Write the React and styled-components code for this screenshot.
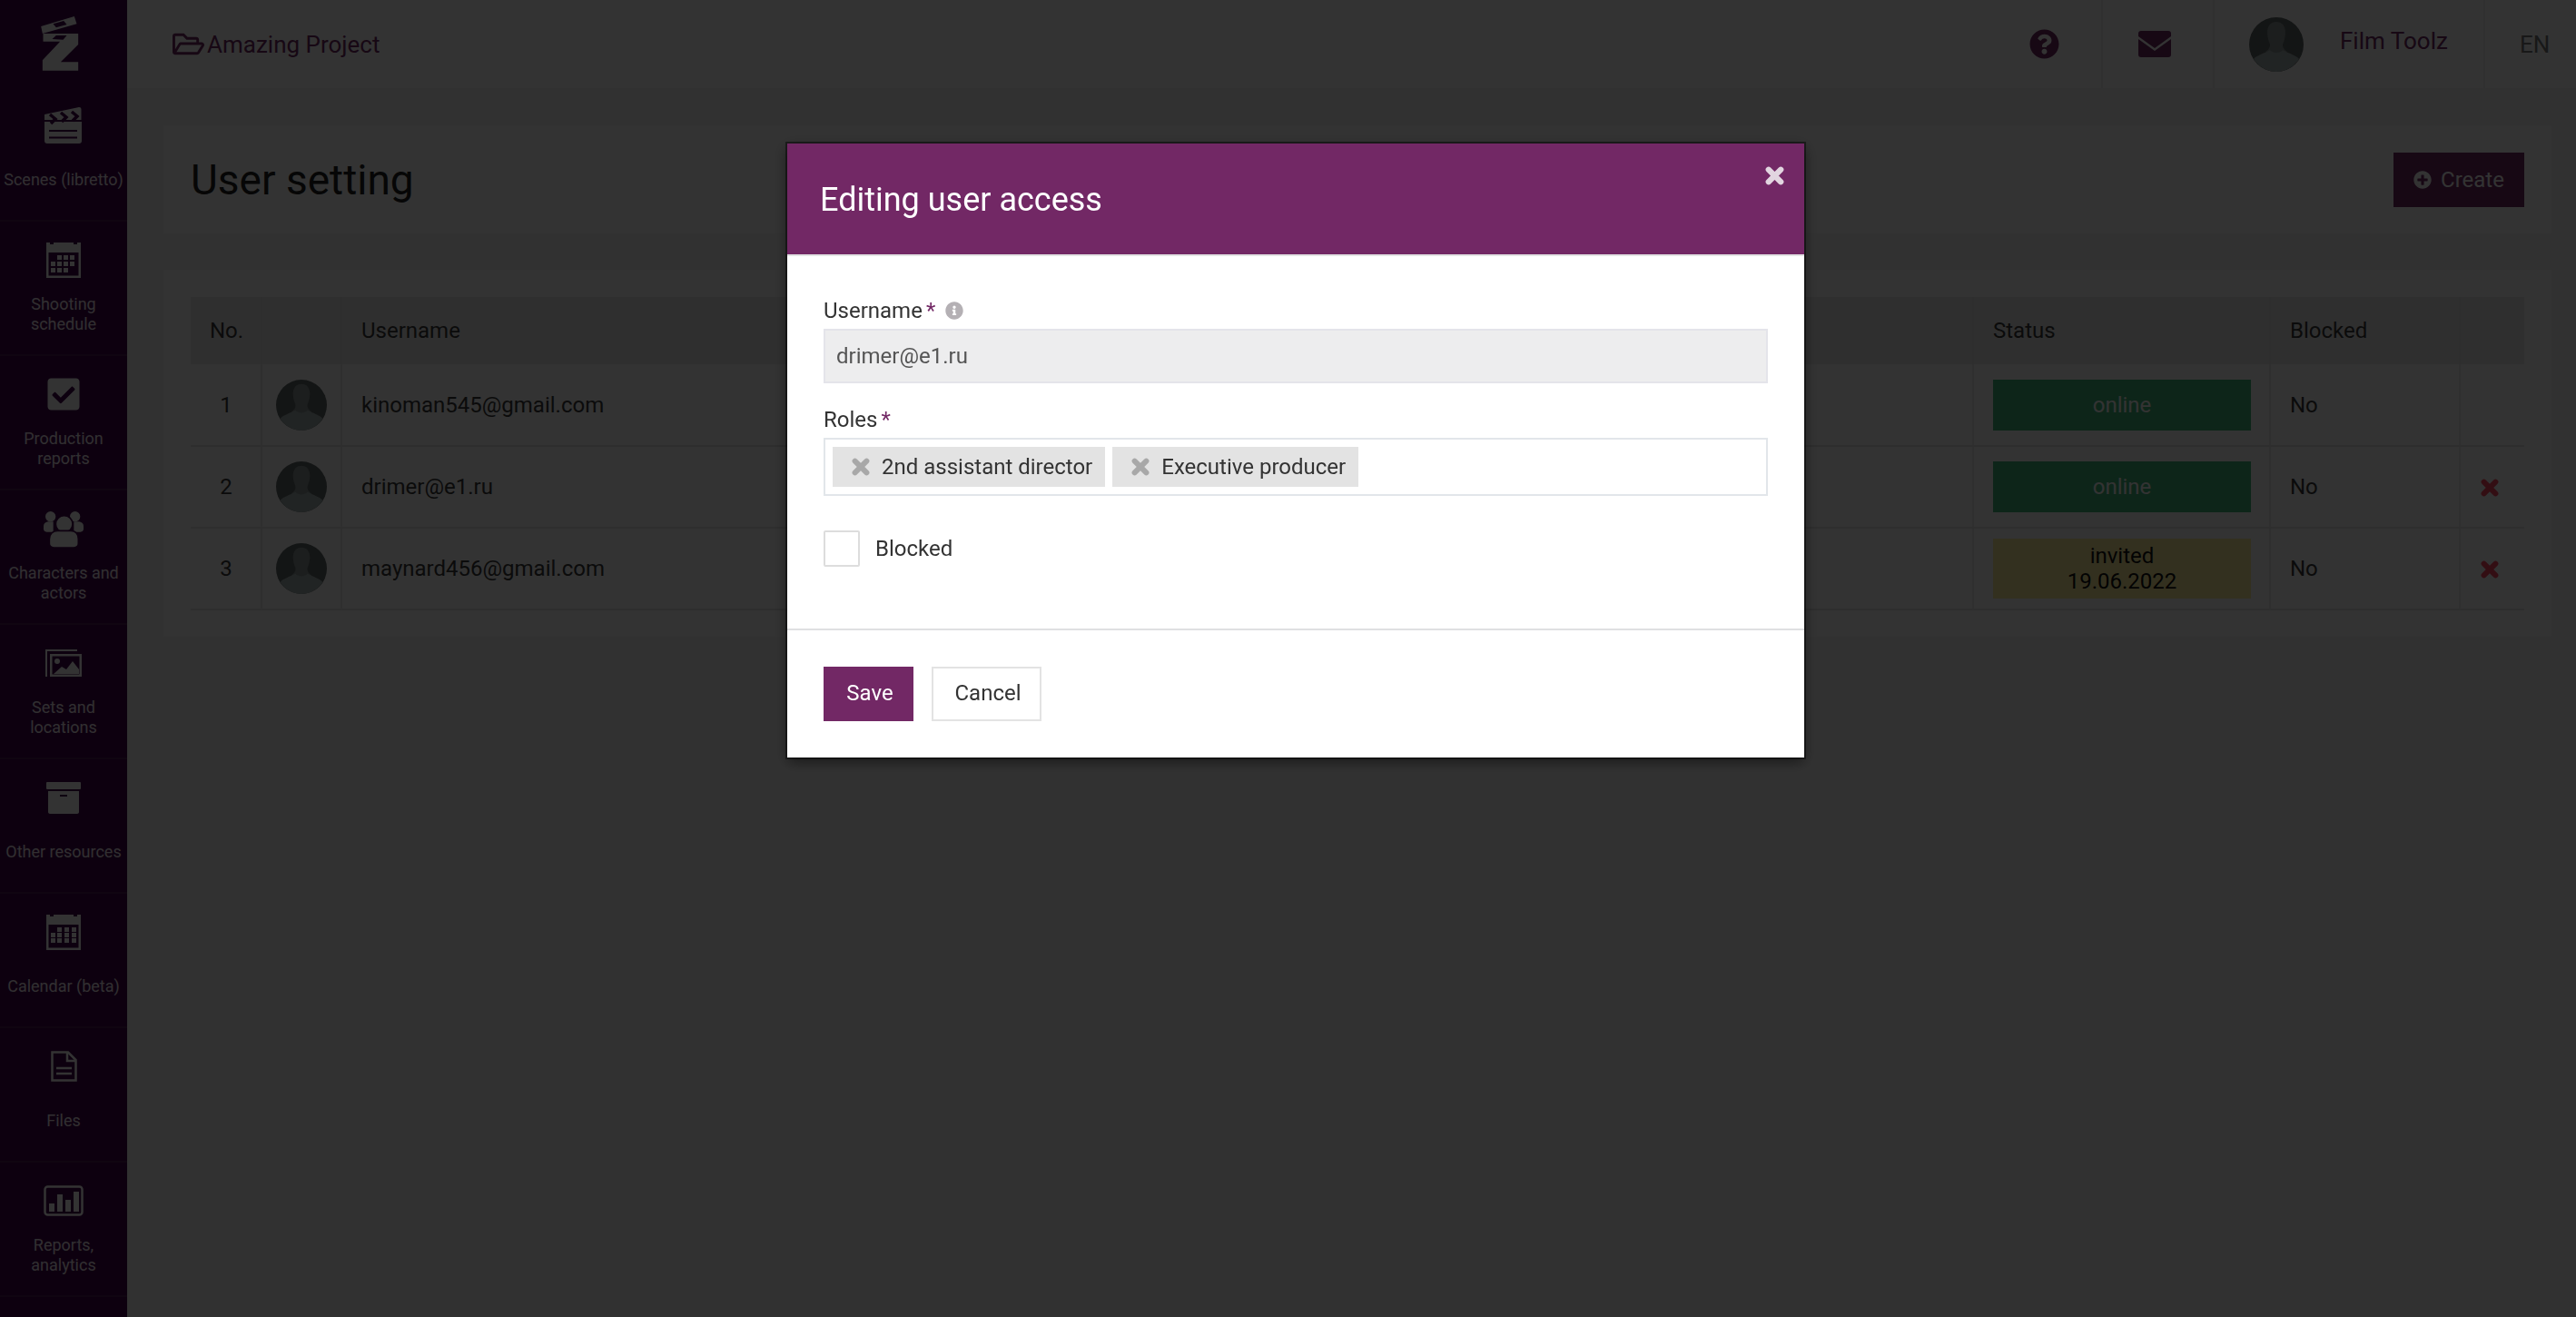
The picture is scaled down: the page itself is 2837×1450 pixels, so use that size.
import React from 'react';
import styled, { createGlobalStyle } from 'styled-components';
import {
  FaRegFolderOpen,
  FaQuestionCircle,
  FaCheckSquare,
  FaPlusCircle,
  FaInfoCircle,
} from 'react-icons/fa';

const PURPLE = '#722865';

const GlobalStyle = createGlobalStyle`
  html, body {
    margin: 0;
    padding: 0;
    height: 100%;
    overflow: hidden;
    background: #f6f6f6;
    font-family: Roboto, "Liberation Sans", sans-serif;
  }
  * {
    box-sizing: border-box;
  }
`;

const Layout = styled.div`
  display: flex;
  height: 100vh;
  overflow: hidden;
`;

const Sidebar = styled.nav`
  flex: 0 0 140px;
  background: #41004b;
  color: #fff;
  display: flex;
  flex-direction: column;
`;

const LogoBox = styled.div`
  height: 96px;
  flex: 0 0 96px;
  display: flex;
  align-items: center;
  justify-content: center;
  padding-right: 8px;
`;

const NavItem = styled.a`
  flex: 0 0 148px;
  height: 148px;
  padding-top: 20px;
  display: flex;
  flex-direction: column;
  align-items: center;
  border-bottom: 2px solid #4f1a58;
`;

const NavIcon = styled.div`
  height: 44px;
  display: flex;
  align-items: center;
  justify-content: center;
  color: #fff;
`;

const NavLabel = styled.div`
  margin-top: 16px;
  height: 44px;
  display: flex;
  align-items: center;
  text-align: center;
  font-size: 18px;
  line-height: 22px;
  color: #f2e8f2;
  white-space: pre-line;
`;

const Main = styled.div`
  flex: 1;
  min-width: 0;
  display: flex;
  flex-direction: column;
`;

const Topbar = styled.header`
  height: 97px;
  flex: 0 0 97px;
  background: #fff;
  display: flex;
  align-items: stretch;
  justify-content: space-between;
`;

const ProjectName = styled.div`
  display: flex;
  align-items: center;
  gap: 3px;
  padding-left: 50px;
  font-size: 26px;
  color: ${PURPLE};
`;

const TopActions = styled.div`
  display: flex;
`;

const TopCell = styled.div`
  width: ${(p) => p.$w}px;
  display: flex;
  align-items: center;
  justify-content: center;
  color: ${PURPLE};
  border-left: ${(p) => (p.$divider ? '2px solid #f0f0f0' : 'none')};
`;

const MailCell = styled(TopCell)`
  padding-right: 8px;
`;

const UserCell = styled(TopCell)`
  justify-content: flex-start;
  padding-left: 38px;
  gap: 40px;
  font-size: 26px;
`;

const UserName = styled.span`
  position: relative;
  top: -4px;
`;

const Lang = styled(TopCell)`
  font-size: 26px;
  color: #777;
  justify-content: flex-start;
  padding-left: 38px;
`;

const Content = styled.main`
  padding: 41px 27px 0 40px;
  display: flex;
  flex-direction: column;
  gap: 40px;
`;

const TitlePanel = styled.section`
  height: 119px;
  background: #fff;
  padding: 0 30px;
  display: flex;
  align-items: center;
  justify-content: space-between;
`;

const PageTitle = styled.h1`
  margin: 0;
  font-size: 46px;
  font-weight: 400;
  color: #222;
`;

const CreateButton = styled.button`
  width: 144px;
  height: 60px;
  border: 0;
  border-radius: 0;
  background: ${PURPLE};
  color: #fff;
  display: flex;
  align-items: center;
  justify-content: center;
  gap: 10px;
  font: inherit;
  font-size: 24px;
`;

const TablePanel = styled.section`
  background: #fff;
  padding: 30px 30px 29px;
`;

const Table = styled.table`
  width: 100%;
  table-layout: fixed;
  border-collapse: collapse;
  font-size: 24px;
  color: #3a3a3a;
`;

const HeadCell = styled.th`
  height: 74px;
  background: #ececec;
  font-weight: 400;
  text-align: ${(p) => p.$align || 'left'};
  padding: 0 20px 0 21px;
  border-left: 2px solid #e4e4e4;
  &:first-child {
    border-left: 0;
  }
`;

const Cell = styled.td`
  height: 90px;
  padding: 0 20px 0 21px;
  text-align: ${(p) => p.$align || 'left'};
  border-left: 2px solid #ececec;
  border-bottom: 2px solid #e4e4e4;
  vertical-align: middle;
  &:first-child {
    border-left: 0;
  }
`;

const AvatarCell = styled(Cell)`
  padding: 0;
  text-align: center;
  line-height: 0;
`;

const DeleteCell = styled(Cell)`
  padding: 2px 30px 0 22px;
`;

const StatusBadge = styled.div`
  min-height: 56px;
  padding: 5px 0;
  display: flex;
  flex-direction: column;
  align-items: center;
  justify-content: center;
  background: ${(p) => (p.$invited ? '#fff09a' : '#41b97d')};
  color: ${(p) => (p.$invited ? '#111' : '#fff')};
  font-size: 24px;
  line-height: 28px;
`;

const DeleteMark = styled.span`
  color: #ff4660;
  line-height: 0;
  display: block;
  text-align: center;
`;

const Overlay = styled.div`
  position: fixed;
  inset: 0;
  background: rgba(0, 0, 0, 0.8);
  display: flex;
  justify-content: center;
  align-items: flex-start;
  padding: 158px 0 0 17px;
`;

const Modal = styled.div`
  position: relative;
  width: 1120px;
  height: 676px;
  background: #fff;
  display: flex;
  flex-direction: column;
  box-shadow: 0 0 0 2px rgba(0, 0, 0, 0.45), 0 5px 15px rgba(0, 0, 0, 0.5);
`;

const ModalHeader = styled.div`
  height: 124px;
  flex: 0 0 124px;
  background: ${PURPLE};
  border-bottom: 2px solid #e3e3e3;
  padding: 2px 38px 0 36px;
  display: flex;
  align-items: center;
`;

const ModalTitle = styled.h2`
  margin: 0;
  font-size: 36px;
  font-weight: 400;
  color: #fff;
`;

const CloseButton = styled.button`
  position: absolute;
  top: 24px;
  right: 22px;
  width: 22px;
  height: 22px;
  padding: 0;
  border: 0;
  background: none;
  color: #e2d5e0;
  line-height: 0;
`;

const ModalBody = styled.div`
  flex: 1;
  padding: 40px 40px 0;
  display: flex;
  flex-direction: column;
`;

const FieldLabel = styled.label`
  height: 40px;
  display: flex;
  align-items: center;
  font-size: 24px;
  color: #333;
`;

const Required = styled.span`
  color: ${PURPLE};
  margin-left: 4px;
`;

const HintIcon = styled.span`
  margin-left: 11px;
  color: #b4b0b4;
  line-height: 0;
`;

const DisabledInput = styled.div`
  height: 60px;
  background: #ededee;
  border: 2px solid #e4e4ea;
  padding: 0 12px;
  display: flex;
  align-items: center;
  font-size: 24px;
  color: #555;
  margin-bottom: 20px;
`;

const TagBox = styled.div`
  height: 64px;
  border: 2px solid #e2e6ea;
  padding: 8px;
  display: flex;
  gap: 8px;
  margin-bottom: 38px;
`;

const Tag = styled.div`
  height: 44px;
  background: #e3e3e3;
  padding: 0 14px 0 21px;
  display: flex;
  align-items: center;
  gap: 13px;
  font-size: 24px;
  color: #333;
`;

const TagRemove = styled.span`
  color: #a8a8a8;
  line-height: 0;
`;

const CheckRow = styled.div`
  display: flex;
  align-items: center;
  gap: 17px;
  font-size: 24px;
  color: #333;
`;

const CheckBox = styled.span`
  width: 40px;
  height: 40px;
  border: 2px solid #ddd;
  border-radius: 2px;
  background: #fff;
`;

const ModalFooter = styled.div`
  flex: 0 0 142px;
  height: 142px;
  border-top: 2px solid #dfe0e2;
  padding: 40px 40px 0;
  display: flex;
  align-items: flex-start;
  gap: 20px;
`;

const FooterButton = styled.button`
  height: 60px;
  width: ${(p) => p.$w}px;
  font: inherit;
  font-size: 24px;
  border-radius: 0;
  border: 2px solid ${(p) => (p.$primary ? PURPLE : '#e3e3e3')};
  background: ${(p) => (p.$primary ? PURPLE : '#fff')};
  color: ${(p) => (p.$primary ? '#fff' : '#333')};
  padding: 0 0 2px 3px;
`;

const XIcon = ({ size = 20 }) => (
  <svg width={size} height={size} viewBox="0 0 20 20" fill="none" stroke="currentColor" strokeWidth="6" strokeLinecap="round">
    <path d="M3.600 3.600L16.400 16.400M16.400 3.600L3.600 16.400" />
  </svg>
);

const Logo = () => (
  <svg width="42" height="60" viewBox="45 25 125 180" fill="#fff">
    <path d="M45 58L155 25L163 50L50 82Z" />
    <path d="M52 82H168V118L110 176H168V204H50V170L108 108H52Z" />
    <path d="M82 100L95 88H130L118 102Z" fill="#41004b" />
    <path d="M85 50L120 40L130 52L95 62Z" fill="#41004b" />
  </svg>
);

const ClapperIcon = () => (
  <svg width="42" height="40" viewBox="0 0 42 40" fill="#fff">
    <path d="M0 8L38 0C40 0 40.500 1 40.500 3V14H0Z" />
    <path d="M0 16H41V37C41 39 40 40 38 40H3C1 40 0 39 0 37Z" />
    <path d="M6 8L12 13L7 18M18 6L24 11L19 16M30 5L36 10L31 15" fill="none" stroke="#41004b" strokeWidth="3.500" />
    <path d="M5 26H36M5 33.500H36" stroke="#41004b" strokeWidth="2" />
  </svg>
);

const CalendarIcon = ({ wide }) => (
  <svg width="38" height="40" viewBox="0 0 38 40" fill="#fff">
    <path fillRule="evenodd" d="M0 1H4V3H8V1H30V3H34V1H38V40H0ZM2.500 12V37.500H35.500V12Z" />
    {(wide
      ? [[5, 21], [12, 21], [20, 21], [28, 21], [5, 27], [12, 27], [20, 27], [28, 27], [12, 15], [20, 15], [28, 15]]
      : [[12, 15], [19, 15], [26, 15], [5, 22], [12, 22], [19, 22], [26, 22], [5, 29], [12, 29], [19, 29]]
    ).map(([x, y]) => (
      <rect key={`${x}-${y}`} x={x} y={y} width="5" height="5" />
    ))}
  </svg>
);

const PeopleIcon = () => (
  <svg width="44" height="41" viewBox="24 5 132 123" fill="#fff">
    <circle cx="47" cy="25" r="17" />
    <circle cx="128" cy="25" r="17" />
    <path d="M24 58C24 46 32 42 44 42H56V76H34C28 76 24 72 24 66Z" />
    <path d="M156 58C156 46 148 42 136 42H124V76H146C152 76 156 72 156 66Z" />
    <circle cx="92" cy="50" r="28" stroke="#41004b" strokeWidth="5" />
    <path d="M43 100C43 84 54 72 70 72H114C130 72 139 84 139 100V114C139 123 132 128 124 128H58C50 128 43 123 43 114Z" stroke="#41004b" strokeWidth="5" />
  </svg>
);

const ImagesIcon = () => (
  <svg width="40" height="30" viewBox="0 0 40 30" fill="#fff">
    <path d="M0 0H35V2H2V30H0Z" />
    <path fillRule="evenodd" d="M5 5H40V30H5ZM7.500 7.500V27.500H37.500V7.500Z" />
    <circle cx="13" cy="13" r="3" />
    <path d="M9 27L18 19L23 22L30 13L37 22V27Z" />
  </svg>
);

const ArchiveIcon = () => (
  <svg width="38" height="35" viewBox="0 0 38 35" fill="#fff">
    <rect x="0" y="0" width="38" height="8" rx="1" />
    <path fillRule="evenodd" d="M2 10H36V33C36 34 35 35 34 35H4C3 35 2 34 2 33ZM15 14V16H23V14Z" />
  </svg>
);

const FileIcon = () => (
  <svg width="29" height="34" viewBox="0 0 29 34" fill="none" stroke="#fff" strokeWidth="2.500">
    <path d="M1.500 1.500H19L27.500 10V32.500H1.500Z" />
    <path d="M18 2V11H27M6 19H23M6 25H23" />
  </svg>
);

const ChartIcon = () => (
  <svg width="44" height="34" viewBox="0 0 44 34" fill="#fff">
    <rect x="1.500" y="1.500" width="41" height="31" rx="3" fill="none" stroke="#fff" strokeWidth="2.500" />
    <rect x="6" y="20" width="6" height="9" />
    <rect x="15" y="10" width="6" height="19" />
    <rect x="24" y="16" width="6" height="13" />
    <rect x="33" y="7" width="6" height="22" />
  </svg>
);

const MailIcon = () => (
  <svg width="36" height="29" viewBox="0 0 36 29">
    <path fill="currentColor" d="M3 0H33C35 0 36 1 36 3V6L18 19L0 6V3C0 1 1 0 3 0Z" />
    <path fill="currentColor" d="M0 9L18 22L36 9V26C36 28 35 29 33 29H3C1 29 0 28 0 26Z" />
  </svg>
);

const Avatar = ({ size }) => (
  <svg width={size} height={size} viewBox="0 0 60 60">
    <circle cx="30" cy="30" r="30" fill="#606868" />
    <path fill="#8a9494" d="M20 17C20 9 24 5 30 5C36 5 40 9 40 17C40 23 38 27 37 30C37 33 38 35 42 38L30 44L18 38C22 35 23 33 23 30C22 27 20 23 20 17Z" />
    <path fill="#a4b2b2" d="M5 46C8 42 16 40 23 36C25 40 35 40 37 36C44 40 52 42 55 46C50 54 40 60 30 60C20 60 10 54 5 46Z" />
  </svg>
);

const NAV_ITEMS = [
  { label: 'Scenes (libretto)', icon: <ClapperIcon /> },
  { label: 'Shooting\nschedule', icon: <CalendarIcon /> },
  { label: 'Production\nreports', icon: <FaCheckSquare size={40} /> },
  { label: 'Characters and\nactors', icon: <PeopleIcon /> },
  { label: 'Sets and\nlocations', icon: <ImagesIcon /> },
  { label: 'Other resources', icon: <ArchiveIcon /> },
  { label: 'Calendar (beta)', icon: <CalendarIcon wide /> },
  { label: 'Files', icon: <FileIcon /> },
  { label: 'Reports,\nanalytics', icon: <ChartIcon /> },
];

const USERS = [
  { id: 1, name: 'kinoman545@gmail.com', status: ['online'], removable: false },
  { id: 2, name: 'drimer@e1.ru', status: ['online'], removable: true },
  { id: 3, name: 'maynard456@gmail.com', status: ['invited', '19.06.2022'], invited: true, removable: true },
];

const App = () => (
  <Layout>
    <GlobalStyle />
    <Sidebar>
      <LogoBox>
        <Logo />
      </LogoBox>
      {NAV_ITEMS.map((item) => (
        <NavItem key={item.label}>
          <NavIcon>{item.icon}</NavIcon>
          <NavLabel>{item.label}</NavLabel>
        </NavItem>
      ))}
    </Sidebar>
    <Main>
      <Topbar>
        <ProjectName>
          <FaRegFolderOpen size={35} />
          Amazing Project
        </ProjectName>
        <TopActions>
          <TopCell $w={125}>
            <FaQuestionCircle size={33} />
          </TopCell>
          <MailCell $w={123} $divider>
            <MailIcon />
          </MailCell>
          <UserCell $w={298} $divider>
            <Avatar size={60} />
            <UserName>Film Toolz</UserName>
          </UserCell>
          <Lang $w={102} $divider>EN</Lang>
        </TopActions>
      </Topbar>
      <Content>
        <TitlePanel>
          <PageTitle>User setting</PageTitle>
          <CreateButton>
            <FaPlusCircle size={20} />
            Create
          </CreateButton>
        </TitlePanel>
        <TablePanel>
          <Table>
            <colgroup>
              <col style={{ width: 78 }} />
              <col style={{ width: 88 }} />
              <col />
              <col style={{ width: 327 }} />
              <col style={{ width: 209 }} />
              <col style={{ width: 71 }} />
            </colgroup>
            <thead>
              <tr>
                <HeadCell $align="center">No.</HeadCell>
                <HeadCell />
                <HeadCell>Username</HeadCell>
                <HeadCell>Status</HeadCell>
                <HeadCell>Blocked</HeadCell>
                <HeadCell />
              </tr>
            </thead>
            <tbody>
              {USERS.map((user) => (
                <tr key={user.id}>
                  <Cell $align="center">{user.id}</Cell>
                  <AvatarCell>
                    <Avatar size={56} />
                  </AvatarCell>
                  <Cell>{user.name}</Cell>
                  <Cell>
                    <StatusBadge $invited={user.invited}>
                      {user.status.map((line) => (
                        <span key={line}>{line}</span>
                      ))}
                    </StatusBadge>
                  </Cell>
                  <Cell>No</Cell>
                  <DeleteCell>
                    {user.removable && (
                      <DeleteMark>
                        <XIcon size={20} />
                      </DeleteMark>
                    )}
                  </DeleteCell>
                </tr>
              ))}
            </tbody>
          </Table>
        </TablePanel>
      </Content>
    </Main>
    <Overlay>
      <Modal>
        <ModalHeader>
          <ModalTitle>Editing user access</ModalTitle>
        </ModalHeader>
        <CloseButton>
          <XIcon size={21} />
        </CloseButton>
        <ModalBody>
          <FieldLabel>
            Username<Required>*</Required>
            <HintIcon>
              <FaInfoCircle size={20} />
            </HintIcon>
          </FieldLabel>
          <DisabledInput>drimer@e1.ru</DisabledInput>
          <FieldLabel>
            Roles<Required>*</Required>
          </FieldLabel>
          <TagBox>
            <Tag>
              <TagRemove>
                <XIcon size={20} />
              </TagRemove>
              2nd assistant director
            </Tag>
            <Tag>
              <TagRemove>
                <XIcon size={20} />
              </TagRemove>
              Executive producer
            </Tag>
          </TagBox>
          <CheckRow>
            <CheckBox />
            Blocked
          </CheckRow>
        </ModalBody>
        <ModalFooter>
          <FooterButton $primary $w={99}>Save</FooterButton>
          <FooterButton $w={121}>Cancel</FooterButton>
        </ModalFooter>
      </Modal>
    </Overlay>
  </Layout>
);

export default App;
